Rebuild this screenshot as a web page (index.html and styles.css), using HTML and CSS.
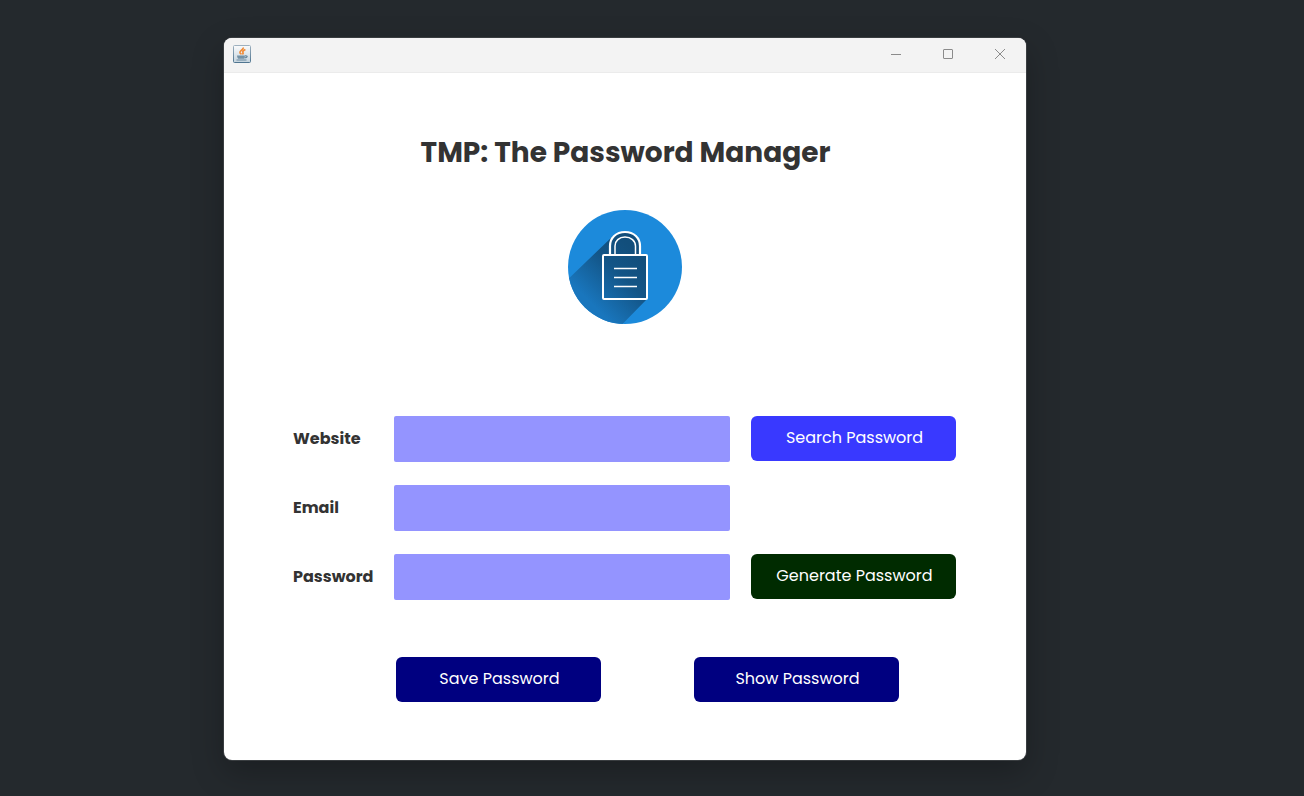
FILE: index.html
```html
<!DOCTYPE html>
<html lang="en">
<head>
<meta charset="utf-8">
<meta name="viewport" content="width=device-width, initial-scale=1">
<title>TMP: The Password Manager</title>
<link rel="stylesheet" href="styles.css">
</head>
<body class="desktop">
<div class="window">
  <header class="titlebar">
    <svg class="app-icon" viewBox="0 0 18 18" aria-hidden="true">
      <defs>
        <linearGradient id="frame" x1="0" y1="0" x2="0" y2="1"><stop offset="0" stop-color="#9db0bf"/><stop offset="1" stop-color="#4f7590"/></linearGradient>
        <linearGradient id="tile" x1="0" y1="0" x2="0" y2="1"><stop offset="0" stop-color="#fafbfc"/><stop offset="1" stop-color="#c3d2dc"/></linearGradient>
      </defs>
      <rect x=".5" y=".5" width="17" height="17" rx="1" fill="url(#tile)" stroke="url(#frame)"/>
      <path d="M10.200 2.500C10.800 4.800 6.400 5.500 7 7.600c.3.800 1 1.200 1.400 1.800M12.400 4.600C10 5.800 9.300 6.500 10 7.600c.5.800 0 1.300-.6 1.800" fill="none" stroke="#f08a35" stroke-width="1.700"/>
      <path d="M4 10.400h8c-.1 2-.9 3.400-1.600 3.400H5.900C5 13.800 4.100 12.400 4 10.400z" fill="#7391a5"/>
      <path d="M12 10.900c3.200-.6 2.800 1.900-.6 2M3.500 15h10" fill="none" stroke="#68889e" stroke-width="1.200"/>
    </svg>
    <div class="window-controls">
      <button class="window-button" type="button" aria-label="Minimize"><svg viewBox="0 0 12 12"><path d="M1 6.500h10"/></svg></button>
      <button class="window-button" type="button" aria-label="Maximize"><svg viewBox="0 0 12 12"><rect x="1.500" y="1.500" width="9" height="9" rx=".5"/></svg></button>
      <button class="window-button" type="button" aria-label="Close"><svg viewBox="0 0 12 12"><path d="M1 1l10 10M11 1L1 11"/></svg></button>
    </div>
  </header>
  <main class="content">
    <h1 class="title">TMP: The Password Manager</h1>
    <svg class="logo" viewBox="0 0 114 114" role="img" aria-label="Padlock">
      <defs>
        <linearGradient id="shade" gradientUnits="userSpaceOnUse" x1="68" y1="42" x2="20" y2="90"><stop offset="0" stop-color="#124e7b"/><stop offset=".4" stop-color="#135587"/><stop offset="1" stop-color="#1976bd"/></linearGradient>
        <clipPath id="disc"><circle cx="57" cy="57" r="57"/></clipPath>
      </defs>
      <g clip-path="url(#disc)">
        <path d="M0 0h114v114H0z" fill="#1c8adb"/>
        <path d="M45 26L-4 73v60h40L79 89V45h-7V37C72 19 54 20 45 26z" fill="url(#shade)"/>
      </g>
      <g fill="none" stroke="#fff" stroke-width="2">
        <rect x="35" y="45" width="44" height="44" rx="1"/>
        <path d="M42 45V36C42 28 48 22 57 22S72 28 72 36v9" stroke-width="2.200"/>
        <path d="M47 45V36C47 31 51 27 57 27s10.500 4 10.500 9v9" stroke-width="1.500"/>
        <path d="M46 58.500h23M46 67.500h23M46 76.500h23" stroke-width="1.500"/>
      </g>
    </svg>
    <form class="form">
      <div class="fields">
        <label class="label" for="website">Website</label>
        <input class="field" id="website" type="text">
        <button class="button button-search" type="button">Search Password</button>
        <label class="label" for="email">Email</label>
        <input class="field" id="email" type="email">
        <label class="label" for="password">Password</label>
        <input class="field" id="password" type="text">
        <button class="button button-generate" type="button">Generate Password</button>
      </div>
      <div class="actions">
        <button class="button button-action" type="submit">Save Password</button>
        <button class="button button-action" type="button">Show Password</button>
      </div>
    </form>
  </main>
</div>
</body>
</html>
```

FILE: styles.css
```css
* {
  box-sizing: border-box;
}

.desktop {
  margin: 0;
  min-height: 100vh;
  padding: 38px 0 36px;
  display: grid;
  grid-template-columns: 224fr 802fr 278fr;
  background: #24292d;
  color: #333;
  font-family: Poppins, Inter, sans-serif;
}

.window {
  grid-column: 2;
  display: flex;
  flex-direction: column;
  background: #fff;
  border-radius: 8px;
  overflow: hidden;
  box-shadow: 0 0 0 1px #393d40, 0 12px 32px rgba(0, 0, 0, 0.25);
}

.titlebar {
  display: flex;
  align-items: center;
  justify-content: space-between;
  height: 35px;
  padding: 0 0 2px 9px;
  background: #f3f3f3;
  border-bottom: 1px solid #ebebeb;
}

.app-icon {
  width: 18px;
  height: 18px;
}

.window-controls {
  display: flex;
}

.window-button {
  width: 52px;
  height: 32px;
  padding: 0;
  border: 0;
  display: grid;
  place-items: center;
  background: transparent;
}

.window-button svg {
  width: 12px;
  height: 12px;
  fill: none;
  stroke: #8b8b8b;
}

.content {
  flex: 1;
  display: flex;
  flex-direction: column;
  align-items: center;
  padding: 60px 70px 58px 69px;
}

.title {
  margin: 0 0 37px;
  padding-left: 2px;
  font-size: 28px;
  line-height: 40px;
  font-weight: 700;
}

.logo {
  width: 114px;
  height: 114px;
}

.form {
  align-self: stretch;
  margin-top: 92px;
}

.fields {
  display: grid;
  grid-template-columns: 101px 1fr 226px;
  row-gap: 23px;
  align-items: center;
}

.label {
  grid-column: 1;
  font-size: 16px;
  line-height: 24px;
  font-weight: 700;
}

.field {
  grid-column: 2;
  width: 100%;
  height: 46px;
  padding: 0 12px;
  border: 0;
  border-radius: 2px;
  background: #9494ff;
  color: #333;
  font: inherit;
}

.button {
  width: 205px;
  height: 45px;
  padding: 0 0 1px 2px;
  border: 0;
  border-radius: 6px;
  color: #fff;
  font-family: inherit;
  font-size: 16px;
  line-height: 24px;
}

.button-search {
  justify-self: end;
  align-self: start;
  background: #3939ff;
}

.button-generate {
  justify-self: end;
  align-self: start;
  background: #002b00;
}

.actions {
  display: flex;
  justify-content: space-between;
  padding: 57px 57px 0 103px;
}

.button-action {
  background: #000080;
}
```
